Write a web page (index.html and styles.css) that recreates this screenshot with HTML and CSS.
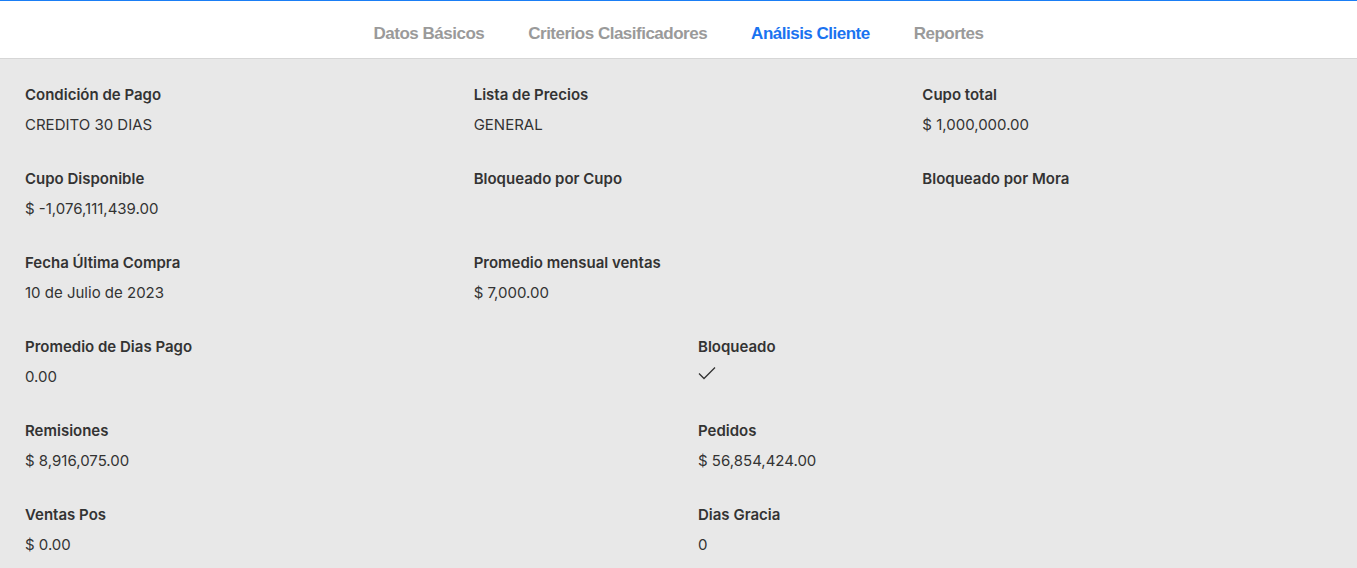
FILE: index.html
```html
<!DOCTYPE html>
<html lang="es">
<head>
<meta charset="utf-8">
<title>Análisis Cliente</title>
<link rel="stylesheet" href="styles.css">
</head>
<body>
<header class="tabs">
  <nav class="tab-list">
    <span class="tab">Datos Básicos</span>
    <span class="tab">Criterios Clasificadores</span>
    <span class="tab active">Análisis Cliente</span>
    <span class="tab">Reportes</span>
  </nav>
</header>
<main class="content">
  <section class="grid three">
    <div class="field"><div class="label">Condición de Pago</div><div class="value">CREDITO 30 DIAS</div></div>
    <div class="field"><div class="label">Lista de Precios</div><div class="value">GENERAL</div></div>
    <div class="field"><div class="label">Cupo total</div><div class="value">$ 1,000,000.00</div></div>
    <div class="field"><div class="label">Cupo Disponible</div><div class="value">$ -1,076,111,439.00</div></div>
    <div class="field"><div class="label">Bloqueado por Cupo</div><div class="value"></div></div>
    <div class="field"><div class="label">Bloqueado por Mora</div><div class="value"></div></div>
    <div class="field"><div class="label">Fecha Última Compra</div><div class="value">10 de Julio de 2023</div></div>
    <div class="field"><div class="label">Promedio mensual ventas</div><div class="value">$ 7,000.00</div></div>
    <div class="field"></div>
  </section>
  <section class="grid two">
    <div class="field"><div class="label">Promedio de Dias Pago</div><div class="value">0.00</div></div>
    <div class="field"><div class="label">Bloqueado</div><div class="value"><svg class="check" width="18" height="14" viewBox="0 0 18 14"><path d="M1 7.5 L6 12.5 L17 1.5" fill="none" stroke="#333" stroke-width="1.3"/></svg></div></div>
    <div class="field"><div class="label">Remisiones</div><div class="value">$ 8,916,075.00</div></div>
    <div class="field"><div class="label">Pedidos</div><div class="value">$ 56,854,424.00</div></div>
    <div class="field"><div class="label">Ventas Pos</div><div class="value">$ 0.00</div></div>
    <div class="field"><div class="label">Dias Gracia</div><div class="value">0</div></div>
  </section>
</main>
</body>
</html>
```
FILE: styles.css
```css
html, body {
  margin: 0;
  padding: 0;
  overflow: hidden;
}
body {
  background: #e8e8e8;
  font-family: Inter, "Open Sans", sans-serif;
  color: #333;
  width: 1357px;
  height: 568px;
}
.tabs {
  background: #fff;
  border-top: 1px solid #1a7ef5;
  border-bottom: 1px solid #d6d6d6;
  height: 57px;
  display: flex;
  justify-content: center;
  align-items: center;
}
.tab-list {
  display: flex;
  gap: 44px;
  padding-top: 9px;
}
.tab {
  font-family: "Liberation Sans", Arial, sans-serif;
  font-weight: bold;
  font-size: 17px;
  color: #9a9a9a;
  letter-spacing: -0.5px;
}
.tab.active {
  color: #1a73f0;
}
.content {
  padding: 25px 0 0 25px;
}
.grid {
  display: grid;
  width: 1346px;
}
.grid.three {
  grid-template-columns: repeat(3, 1fr);
}
.grid.two {
  grid-template-columns: repeat(2, 1fr);
}
.field {
  height: 84px;
}
.label {
  font-size: 15px;
  font-weight: 600;
  line-height: 22px;
}
.value {
  font-size: 15px;
  font-weight: 400;
  line-height: 22px;
  margin-top: 8px;
}
.check {
  display: block;
  margin-top: 6px;
}
```
